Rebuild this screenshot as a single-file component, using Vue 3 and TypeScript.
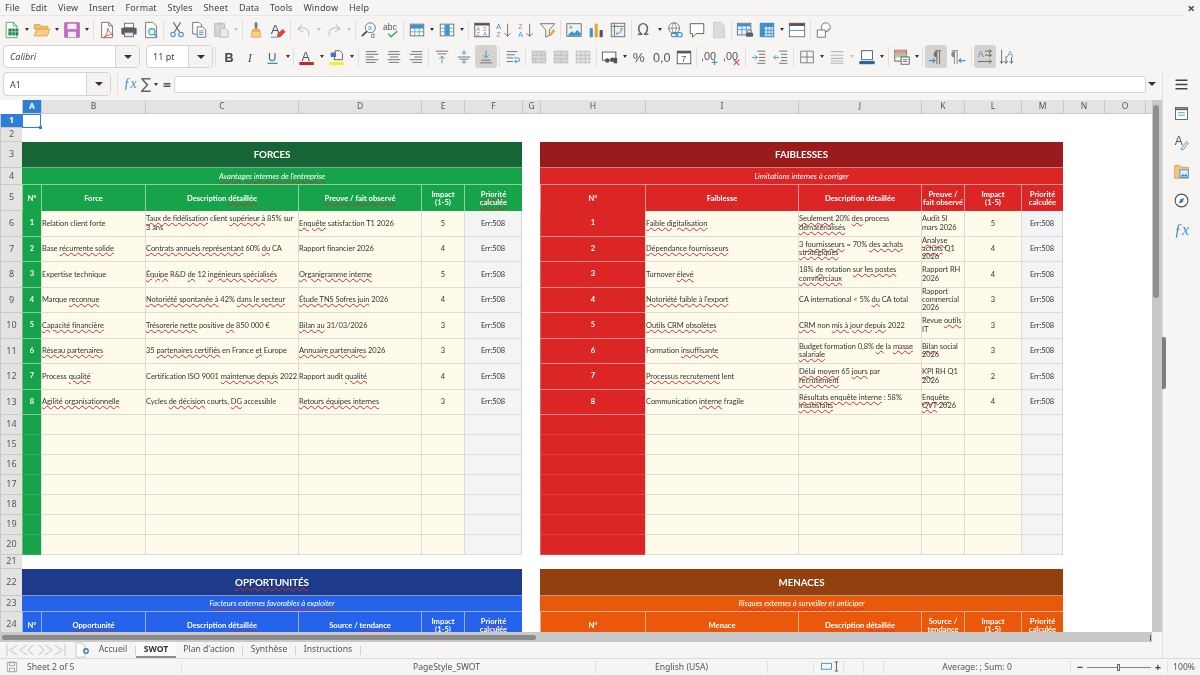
<script setup lang="ts">
import { computed } from 'vue';

type Cell = { key: string; cls: string; col: number; row: number; span: number; text: string };

const menus = ['File', 'Edit', 'View', 'Insert', 'Format', 'Styles', 'Sheet', 'Data', 'Tools', 'Window', 'Help'];

// ">" = petite fleche, "|" = separateur, "!" devant = bouton actif, "-" = fleche grisee
const toolbar1 = ['new', '>', 'open', '>', 'save', '>', '|', 'pdf', 'print', 'preview', '|', 'cut', 'copy', 'paste', '-', '|', 'clone', 'clear', '|', 'undo', '-', 'redo', '-', '|', 'find', 'spell', '|', 'rows', '>', 'cols', '>', '|', 'sort', 'asc', 'desc', 'filter', '|', 'image', 'chart', 'pivot', '|', 'omega', '>', 'link', 'comment', 'hf', '|', 'printarea', 'freeze', '>', 'split', '|', 'shapes'];
const toolbar2 = ['|', 'bold', 'italic', 'under', '>', '|', 'color', '>', 'hilite', '>', '|', 'left', 'center', 'right', '|', 'top', 'middle', '!bottom', '|', 'wrap', '|', 'merge', 'merge2', 'merge3', '|', 'money', '>', 'pct', 'num', 'date', '|', 'adddec', 'deldec', '|', 'indent', 'outdent', '|', 'borders', '>', 'bstyle', '-', 'bcolor', '>', '|', 'cond', '>', '|', '!ltr', 'rtl', '|', '!horiz', 'vert'];

const blue = '#3b93cf';
const gray = '#6b6b6b';
const line = (d: string, c = gray, w = 1) => `<path d="${d}" fill="none" stroke="${c}" stroke-width="${w}"/>`;
const grid = (c: string) => `<rect x="2.5" y="3.5" width="15" height="13" fill="#fff" stroke="${gray}"/><path d="M2.5 8h15M2.5 12h15M7.5 3.5v13M12.5 3.5v13" stroke="${c}" stroke-width=".8"/>`;

const icons: Record<string, string> = {
  new: `<path d="M3.5 1.5h8l4 4v13h-12z" fill="#fff" stroke="#4da463"/><path d="M11.5 1.5v4h4" fill="none" stroke="#4da463"/><rect x="6" y="8.5" width="11" height="7.5" fill="#1f8a46"/><path d="M6 12h11M10 8.5V16M13.5 8.5V16" stroke="#d6f0dd" stroke-width=".7"/>`,
  open: `<path d="M1.5 4h6l2 2h7v3h-15z" fill="#f2c274" stroke="#e59b36"/><path d="M1.5 16.5 4.5 9h14l-2.5 7.500z" fill="#f8cf8a" stroke="#e59b36"/>`,
  save: `<path d="M2 2h16v16H2z" fill="#c06fc4" stroke="#a552aa"/><rect x="5" y="3" width="10" height="6" fill="#f7ecf8"/><rect x="5.500" y="12" width="9" height="6" fill="#f7ecf8"/>`,
  pdf: `<path d="M4 1.500h8l4 4v13H4z" fill="#fff" stroke="${gray}"/><path d="M12 1.500v4h4" fill="none" stroke="${gray}"/><path d="M7 18c3-3 4-7 4-10 1 4 3 6 6 7-4 0-8 1-10 3z" fill="none" stroke="#d8503f" stroke-width="1"/>`,
  print: `<rect x="5" y="2.500" width="10" height="5" fill="#fff" stroke="${gray}"/><rect x="1.500" y="7.500" width="17" height="7.500" rx="1" fill="#55606b"/><rect x="5" y="12.500" width="10" height="5" fill="#dfe6ea" stroke="${gray}"/>`,
  preview: `<path d="M4 1.500h8l4 4v13H4z" fill="#fff" stroke="${gray}"/><circle cx="11" cy="12" r="3.500" fill="#e4f1fa" stroke="${blue}" stroke-width="1.200"/><path d="m13.500 14.500 3.500 3.500" stroke="${blue}" stroke-width="1.500"/>`,
  cut: `<path d="m6 1.500 7 11M14 1.500l-7 11" stroke="#5c6670" stroke-width="1.200"/><circle cx="5.500" cy="15" r="2.500" fill="none" stroke="${blue}" stroke-width="1.200"/><circle cx="14.500" cy="15" r="2.500" fill="none" stroke="${blue}" stroke-width="1.200"/>`,
  copy: `<path d="M3 1.500h7l3 3v10H3z" fill="#fff" stroke="${gray}"/><path d="M8 6.500h6l3.500 3.500v8H8z" fill="#fff" stroke="${gray}"/>${line('M10 11h5M10 13h5M10 15h5', blue)}`,
  paste: `<rect x="3" y="3" width="11" height="14" fill="#d5d5d3" stroke="#b9b9b7"/><rect x="6" y="1.500" width="5" height="3" fill="#c5c5c3"/><path d="M9 8h6l3 3v7H9z" fill="#e9e9e7" stroke="#b9b9b7"/>`,
  clone: `<path d="M8.500 1.500h3v7h-3z" fill="#777" /><path d="M5.500 9h9v2.500h-9z" fill="#f0a94e"/><path d="M5.500 11.500h9l1 6.500h-11z" fill="#fbd08f" stroke="#e59b36" stroke-width=".8"/>`,
  clear: `<text x="2" y="14" font-size="15" font-family="Liberation Sans" fill="#4d5a66">A</text><path d="m9 15 6-6 3.500 3-6 6H9z" fill="#e2443f"/>${line('M2 18h8', blue)}`,
  undo: line('M3 9l5-5M3 9l6 3M3.500 9C10 6 17 8 15 17', '#c8c8c6', 1.300),
  redo: line('M17 9l-5-5M17 9l-6 3M16.500 9C10 6 3 8 5 17', '#c8c8c6', 1.300),
  find: `<circle cx="11.500" cy="7.500" r="5.500" fill="#fff" stroke="#5c6670"/><path d="m7.500 11.500-5.500 5.500" stroke="#444" stroke-width="1.800"/><text x="9" y="10" font-size="7.500" font-family="Liberation Sans" fill="${blue}">a</text><text x="12" y="19" font-size="8" font-family="Liberation Sans" fill="#555">d</text>`,
  spell: `<text x="1" y="10" font-size="9.500" font-family="Liberation Sans" fill="#555">abc</text>${line('m7 14 3 3.500 7-6', '#38a560', 1.500)}`,
  rows: grid(blue) + `<rect x="3" y="4" width="14" height="4" fill="${blue}"/>`,
  cols: grid(blue) + `<rect x="8" y="4" width="4.500" height="12" fill="${blue}"/>`,
  sort: `<rect x="2" y="2.500" width="16" height="15" fill="#fff" stroke="#555"/><rect x="2" y="2.500" width="16" height="2.500" fill="#555"/><text x="3.500" y="11" font-size="6.500" font-family="Liberation Sans" fill="${blue}">A</text><text x="3.500" y="17" font-size="6.500" font-family="Liberation Sans" fill="#c56cc4">Z</text><text x="11" y="11" font-size="6.500" font-family="Liberation Sans" fill="#c56cc4">Z</text><text x="11" y="17" font-size="6.500" font-family="Liberation Sans" fill="${blue}">A</text>`,
  asc: `<text x="1.500" y="9" font-size="8" font-family="Liberation Sans" fill="${blue}">A</text><text x="1.500" y="18" font-size="8" font-family="Liberation Sans" fill="#c56cc4">Z</text>${line('M14 3v14M10.500 13.500 14 17l3.500-3.500')}`,
  desc: `<text x="1.500" y="9" font-size="8" font-family="Liberation Sans" fill="#c56cc4">Z</text><text x="1.500" y="18" font-size="8" font-family="Liberation Sans" fill="${blue}">A</text>${line('M14 3v14M10.500 13.500 14 17l3.500-3.500')}`,
  filter: `${line('M1.500 3h16l-6 7v6l-4 2v-8z')}<path d="m11 16 5-7 2 2-5 6z" fill="#eea22f"/>`,
  image: `<rect x="2" y="3" width="16" height="14" fill="#e8f3fa" stroke="${gray}"/><circle cx="6.500" cy="7" r="1.600" fill="#eea22f"/><path d="m2.500 16.500 5-5 3 2 3-3.500 4 4v2.500z" fill="${blue}"/>`,
  chart: `<rect x="3" y="8" width="3.500" height="10" fill="${blue}"/><rect x="8.500" y="3" width="3.500" height="15" fill="#eea22f"/><rect x="14" y="10" width="3.500" height="8" fill="#555"/>`,
  pivot: `<rect x="2.500" y="2.500" width="15" height="15" fill="#eee" stroke="${gray}"/>${line('M2.500 6h15M6 2.500v15')}${line('M8 14c4 0 6-2 6-6M12.500 9.500 14 8l1.500 1.500M9.500 12.500 8 14l1.500 1.500', blue)}`,
  omega: `<text x="1.500" y="16" font-size="17" font-family="DejaVu Sans" fill="#5c6670">Ω</text>`,
  link: `<circle cx="9" cy="8" r="6" fill="#fff" stroke="#66727c"/>${line('M3 8h12M9 2c-3 3-3 9 0 12M9 2c3 3 3 9 0 12', '#66727c', .8)}<rect x="6" y="13" width="7" height="4.500" rx="2.200" fill="none" stroke="${blue}" stroke-width="1.300"/><rect x="11" y="13" width="7" height="4.500" rx="2.200" fill="none" stroke="${blue}" stroke-width="1.300"/>`,
  comment: `<path d="M2.500 3h15v11H9l-4 4v-4H2.500z" fill="#fff" stroke="#555"/>`,
  hf: `<path d="M4 1.500h8l4 4v13H4z" fill="#dcdcda" stroke="#cacac8"/>`,
  printarea: `<rect x="1.500" y="2.500" width="15" height="13" fill="#eaf3fa" stroke="${gray}"/><rect x="2" y="3" width="14" height="3" fill="${blue}"/>${line('M1.500 9.500h15M6.500 2.500v13M11.500 2.500v13', blue, .8)}<rect x="11" y="13" width="8" height="4.500" rx="1" fill="#55606b"/><rect x="12.500" y="11" width="5" height="2" fill="#fff" stroke="#555" stroke-width=".6"/>`,
  freeze: `<rect x="2.500" y="2.500" width="15" height="15" fill="#cfe5f4" stroke="#2a7db6"/><rect x="2.500" y="2.500" width="5" height="15" fill="#3b93cf"/><rect x="2.500" y="2.500" width="15" height="4" fill="#3b93cf"/>${line('M2.500 10.500h15M2.500 14h15M11 2.500v15M14.500 2.500v15', '#2a7db6', .7)}`,
  split: `<rect x="1.500" y="2.500" width="17" height="15" fill="#fff" stroke="${gray}"/><rect x="1.500" y="2.500" width="17" height="3" fill="#555"/>${line('M1.500 10.500h17', blue)}`,
  shapes: `<circle cx="12" cy="7" r="5" fill="#fff" stroke="${gray}"/><path d="M2.500 10h9v8h-9z" fill="#fff" stroke="${gray}"/>${line('m12 12 4-4', blue)}`,
  bold: `<text x="5" y="15" font-size="14" font-weight="700" font-family="Liberation Sans" fill="#444">B</text>`,
  italic: `<text x="6.500" y="15" font-size="14" font-style="italic" font-family="Liberation Serif" fill="#555">I</text>`,
  under: `<text x="4.500" y="14" font-size="13" font-family="Liberation Sans" fill="#555">U</text><path d="M4 17h11" stroke="${blue}" stroke-width="1.500"/>`,
  color: `<text x="4" y="14" font-size="14" font-family="Liberation Sans" fill="#555">A</text><rect x="1.500" y="15.500" width="16" height="3.500" fill="#c1272d"/>`,
  hilite: `<rect x="1.500" y="15.500" width="16" height="3.500" fill="#f7ef2a"/><path d="M8 3h5l3 3v7H7z" fill="#fff" stroke="#555"/><rect x="3" y="5" width="6" height="5" fill="#3f78b5"/>`,
  left: line('M3 4h12M3 7h14M3 10h9M3 13h14M3 16h11'),
  center: line('M4 4h12M3 7h14M5.500 10h9M3 13h14M4.500 16h11'),
  right: line('M5 4h12M3 7h14M8 10h9M3 13h14M6 16h11'),
  top: `${line('M3 3.500h14M5 6.500h10')}${line('M10 17V9M7 12l3-3 3 3', blue)}`,
  middle: `${line('M3 10h14M5 12.500h10')}${line('M10 2v5M7.500 4.500 10 7l2.500-2.500M10 18v-3.500M7.500 16.500 10 14l2.500 2.500', blue)}`,
  bottom: `${line('M5 13.500h10M3 16.500h14')}${line('M10 3v8M7 8l3 3 3-3', blue)}`,
  wrap: `${line('M3 4h12M3 7.500h9M3 11h7M3 15h7')}${line('M11 11h4.500q2 0 2 2t-2 2H12M14 13l-2 2 2 2', blue)}`,
  merge: `<rect x="2.500" y="3.500" width="15" height="13" fill="#d7d7d5" stroke="#bcbcba"/>${line('M2.500 8h15M2.500 12h15M7.500 3.500V8M12.500 3.500V8M6 12v4.500M13 12v4.500', '#bcbcba')}`,
  merge2: `<rect x="2.500" y="3.500" width="15" height="13" fill="#d7d7d5" stroke="#bcbcba"/>${line('M2.500 8h15M2.500 12h15M10 3.500V8M10 12v4.500', '#bcbcba')}`,
  merge3: `<rect x="2.500" y="3.500" width="15" height="13" fill="#e3e3e1" stroke="#bcbcba"/>${line('M2.500 8h15M2.500 12h15M7.500 3.500v13M12.500 3.500v13', '#bcbcba')}`,
  money: `<rect x="1.500" y="4.500" width="15" height="9" fill="#fff" stroke="#555"/><circle cx="7" cy="14" r="2.500" fill="#555"/><circle cx="12.500" cy="13" r="2.500" fill="#555"/><rect x="14" y="11" width="4" height="6" fill="#555"/>`,
  pct: `<text x="2" y="16" font-size="15" font-family="Liberation Sans" fill="#555">%</text>`,
  num: `<text x="0" y="15" font-size="14" font-family="Liberation Sans" fill="#555">0,0</text>`,
  date: `<rect x="2.500" y="3.500" width="15" height="14" fill="#fff" stroke="#555"/><rect x="2.500" y="3.500" width="15" height="2.500" fill="#555"/><text x="7" y="15.500" font-size="10" font-family="Liberation Sans" fill="#555">7</text>`,
  adddec: `<text x="0" y="13" font-size="12" font-family="Liberation Sans" fill="#555">,00</text>${line('M15 13v6M12 16h6', blue, 1.300)}`,
  deldec: `<text x="0" y="13" font-size="12" font-family="Liberation Sans" fill="#555">,00</text>${line('m12 13 6 6M18 13l-6 6', '#d8503f', 1.300)}`,
  indent: `${line('M8 3.500h9M10 7h7M10 10.500h7M10 14h7M8 17h9')}${line('M2 10.500h6M5.500 8l2.500 2.500L5.500 13', blue)}`,
  outdent: `${line('M8 3.500h9M10 7h7M10 10.500h7M10 14h7M8 17h9')}${line('M8 10.500H2M4.500 8 2 10.500 4.500 13', blue)}`,
  borders: line('M3 3.500h14v13H3zM3 10h14M10 3.500v13', '#777'),
  bstyle: line('M3 4h14M3 8h14M3 11.500h14M3 14.500h14M3 17h14', '#b8b8b6', 1.200),
  bcolor: `<rect x="4" y="3" width="12" height="10" fill="#fff" stroke="#555"/><path d="M1.500 14.500h17V18h-17z" fill="#23659f"/>`,
  cond: `<rect x="2" y="2.500" width="13" height="12" fill="#fff" stroke="#555"/><rect x="2" y="2.500" width="13" height="4" fill="#e98f87"/><rect x="2" y="6.500" width="13" height="4" fill="#9dd09f"/><rect x="9" y="10" width="9" height="8" fill="#fff" stroke="#555"/>${line('M11 13h5M11 15h5')}`,
  ltr: `${line('M9 3h7M11 3v15M14 3v15', '#6f6f6d', 1.100)}<path d="M11 3.500a3.500 3.500 0 0 0 0 7z" fill="#6f6f6d"/>${line('M2 14h7M6.500 11.500 9 14l-2.500 2.500', blue, 1.200)}`,
  rtl: `${line('M3 3h7M6 3v15M9 3v15', '#8a8a88', 1.100)}<path d="M6 3.500a3.500 3.500 0 0 0 0 7z" fill="#8a8a88"/>${line('M18 14h-7M13.500 11.500 11 14l2.500 2.500', blue, 1.200)}`,
  horiz: `<text x="2" y="10" font-size="10" font-family="Liberation Sans" fill="${blue}">A</text>${line('M10 3.500h7M14.500 1.500l2.500 2 -2.500 2M10 8h7M14.500 6l2.500 2-2.500 2M2 15h15M14.500 12.500l2.500 2.500-2.500 2.500', '#555', .9)}`,
  vert: `<text x="10" y="10" font-size="10" font-family="Liberation Sans" fill="${blue}">A</text>${line('M4 2v15M2 14.500 4 17l2-2.500M9 9v8M7 14.500 9 17l2-2.500M15 10v7M13 14.500l2 2.500 2-2.500', '#555', .9)}`,
};

const letters = ['A', 'B', 'C', 'D', 'E', 'F', 'G', 'H', 'I', 'J', 'K', 'L', 'M', 'N', 'O'];
const colWidths = [22, 19, 104, 153, 123, 43, 58, 18, 105, 153, 123, 43, 57, 42, 41, 41, 7];
const rowHeights = [14, 14, 14, 26, 17, 26, 25.5, 25.5, 25.5, 25.5, 25.5, 25.5, 25.5, 25.5, 20, 20, 20, 20, 20, 20, 20, 14, 27, 16, 26];
const gridStyle = {
  gridTemplateColumns: colWidths.map((w) => w + 'px').join(' '),
  gridTemplateRows: rowHeights.map((h) => h + 'px').join(' '),
};

// les mots entre ~ ~ ont le soulignement du correcteur
const forces = [
  ['Relation client forte', '~Taux de fidélisation~ client ~supérieur à~ 85% sur 3 ans', '~Enquête~ satisfaction T1 2026', '5'],
  ['Base ~récurrente solide~', '~Contrats annuels représentant~ 60% ~du~ CA', 'Rapport financier 2026', '4'],
  ['Expertise technique', '~Équipe~ R&D ~de~ 12 ~ingénieurs spécialisés~', '~Organigramme interne~', '5'],
  ['Marque ~reconnue~', '~Notoriété spontanée à~ 42% ~dans le secteur~', '~Étude TNS Sofres juin~ 2026', '4'],
  ['~Capacité financière~', '~Trésorerie nette~ positive ~de~ 850 000 €', '~Bilan au~ 31/03/2026', '3'],
  ['~Réseau partenaires~', '35 ~partenaires certifiés~ en France ~et~ Europe', '~Annuaire partenaires~ 2026', '3'],
  ['Process ~qualité~', 'Certification ISO 9001 ~maintenue depuis~ 2022', 'Rapport audit ~qualité~', '4'],
  ['~Agilité organisationnelle~', 'Cycles ~de décision~ courts, ~DG~ accessible', '~Retours équipes internes~', '3'],
];
const faiblesses = [
  ['~Faible digitalisation~', '~Seulement~ 20% ~des~ process ~dématérialisés~', 'Audit SI mars 2026', '5'],
  ['~Dépendance fournisseurs~', '3 ~fournisseurs~ = 70% ~des achats stratégiques~', '~Analyse achats~ Q1 2026', '4'],
  ['Turnover ~élevé~', '18% ~de~ rotation ~sur les postes commerciaux~', 'Rapport RH 2026', '4'],
  ["~Notoriété faible à l'export~", 'CA international < 5% ~du~ CA total', 'Rapport commercial 2026', '3'],
  ['~Outils CRM obsolètes~', '~CRM~ non ~mis à jour depuis~ 2022', 'Revue ~outils~ IT', '3'],
  ['Formation ~insuffisante~', 'Budget formation 0,8% ~de~ la ~masse salariale~', '~Bilan~ social 2026', '3'],
  ['~Processus recrutement~ lent', '~Délai moyen~ 65 ~jours~ par ~recrutement~', '~KPI~ RH Q1 2026', '2'],
  ['Communication ~interne~ fragile', '~Résultats enquête interne~ : 58% ~insatisfaits~', '~Enquête QVT~ 2026', '4'],
];

const blocks = [
  { color: 'green', col: 2, row: 3, title: 'FORCES', sub: "~Avantages internes de l'entreprise~", heads: ['N°', 'Force', 'Description ~détaillée~', '~Preuve / fait observé~', 'Impact\n(1-5)', '~Priorité\ncalculée~'], rows: forces, blanks: 7 },
  { color: 'red', col: 9, row: 3, title: 'FAIBLESSES', sub: 'Limitations internes à corriger', heads: ['N°', 'Faiblesse', 'Description détaillée', 'Preuve /\nfait observé', 'Impact\n(1-5)', 'Priorité\ncalculée'], rows: faiblesses, blanks: 7 },
  { color: 'blue', col: 2, row: 22, title: '~OPPORTUNITÉS~', sub: '~Facteurs externes favorables à exploiter~', heads: ['N°', '~Opportunité~', 'Description ~détaillée~', 'Source / ~tendance~', 'Impact\n(1-5)', '~Priorité\ncalculée~'], rows: [], blanks: 0 },
  { color: 'orange', col: 9, row: 22, title: 'MENACES', sub: '~Risques externes à surveiller et anticiper~', heads: ['N°', 'Menace', 'Description ~détaillée~', 'Source /\ntendance', 'Impact\n(1-5)', 'Priorité\ncalculée'], rows: [], blanks: 0 },
];

const cells = computed(() => {
  const out: Cell[] = [];
  const add = (cls: string, col: number, row: number, span: number, text: string) =>
    out.push({ key: `${col}-${row}`, cls, col, row, span, text });
  // en-tetes de colonnes et de lignes
  letters.forEach((l, i) => add(i === 0 ? 'head on' : 'head', i + 2, 1, 1, l));
  add('head', 17, 1, 1, '');
  for (let r = 1; r <= 24; r++) add(r === 1 ? 'head side on' : 'head side', 1, r + 1, 1, String(r));
  for (const b of blocks) {
    const y = b.row + 1;
    add(`title ${b.color}`, b.col, y, 6, b.title);
    add(`sub ${b.color}`, b.col, y + 1, 6, b.sub);
    b.heads.forEach((h, i) => add(`th ${b.color}`, b.col + i, y + 2, 1, h));
    b.rows.forEach((r, i) => {
      const ry = y + 3 + i;
      add(`num ${b.color}`, b.col, ry, 1, String(i + 1));
      add('td', b.col + 1, ry, 1, r[0]);
      add('td', b.col + 2, ry, 1, r[1]);
      add('td', b.col + 3, ry, 1, r[2]);
      add('td mid', b.col + 4, ry, 1, r[3]);
      add('td mid prio', b.col + 5, ry, 1, 'Err:508');
    });
    for (let i = 0; i < b.blanks; i++) {
      const ry = y + 3 + b.rows.length + i;
      add(`num blank ${b.color}`, b.col, ry, 1, '');
      for (let c = 1; c <= 4; c++) add('td', b.col + c, ry, 1, '');
      add('td prio', b.col + 5, ry, 1, '');
    }
  }
  return out;
});

const parts = (text: string) =>
  text.split('~').map((t, i) => ({ t, err: i % 2 === 1 })).filter((p) => p.t);
</script>

<template>
  <div class="app">
    <div class="menubar">
      <span v-for="m in menus" :key="m">{{ m }}</span>
      <span class="close">×</span>
    </div>

    <div class="toolbar t1">
      <template v-for="(it, i) in toolbar1" :key="i">
        <span v-if="it === '|'" class="sep"></span>
        <span v-else-if="it === '>'" class="arrow"></span>
        <span v-else-if="it === '-'" class="arrow off"></span>
        <span v-else class="tool"><svg viewBox="0 0 20 20" v-html="icons[it]"></svg></span>
      </template>
    </div>

    <div class="toolbar t2">
      <div class="combo font"><span class="val"><i>Calibri</i></span><span class="drop"></span></div>
      <div class="combo size"><span class="val">11 pt</span><span class="drop"></span></div>
      <template v-for="(it, i) in toolbar2" :key="i">
        <span v-if="it === '|'" class="sep"></span>
        <span v-else-if="it === '>'" class="arrow"></span>
        <span v-else-if="it === '-'" class="arrow off"></span>
        <span v-else class="tool" :class="{ active: it[0] === '!' }"><svg viewBox="0 0 20 20" v-html="icons[it.replace('!', '')]"></svg></span>
      </template>
    </div>

    <div class="middle">
      <div class="main">
        <div class="formula">
          <div class="combo name"><span class="val">A1</span><span class="drop"></span></div>
          <span class="sep tall"></span>
          <span class="fx">ƒx</span>
          <span class="sigma">∑</span>
          <span class="arrow"></span>
          <span class="eq">=</span>
          <div class="input"></div>
          <span class="arrow big"></span>
        </div>

        <div class="work">
          <div class="sheet">
            <div class="cells" :style="gridStyle">
              <div
                v-for="c in cells"
                :key="c.key"
                class="cell"
                :class="c.cls"
                :style="{ gridColumn: `${c.col} / span ${c.span}`, gridRow: c.row }"
              >
                <span class="txt"><template v-for="(p, i) in parts(c.text)" :key="i"><span v-if="p.err" class="err">{{ p.t }}</span><template v-else>{{ p.t }}</template></template></span>
              </div>
              <div class="cursor"><span class="handle"></span></div>
            </div>
          </div>
          <div class="vscroll"><span class="vthumb"></span></div>
        </div>

        <div class="hscroll"><span class="hthumb"></span><span class="hmark"></span></div>

        <div class="tabs">
          <svg class="nav" viewBox="0 0 62 14">
            <path d="M2 1v12M12 2 5 7l7 5M22 2l-7 5 7 5M28 2l-5 5 5 5M34 2l5 5-5 5M40 2l7 5-7 5M50 2l7 5-7 5M60 1v12" fill="none" stroke="#d0d0ce" stroke-width="1.200" />
          </svg>
          <svg class="add" viewBox="0 0 14 16">
            <path d="M1 1h6l3 3v11H1z" fill="#fff" stroke="#c9c9c7" />
            <circle cx="11" cy="9" r="2.200" fill="none" stroke="#3f78b5" stroke-width="1.400" />
          </svg>
          <span class="tab t-a">Accueil</span><span class="tsep"></span>
          <span class="tab cur">SWOT</span>
          <span class="tab t-b">Plan d'action</span><span class="tsep"></span>
          <span class="tab t-c">Synthèse</span><span class="tsep"></span>
          <span class="tab t-d">Instructions</span><span class="tsep"></span>
        </div>
      </div>

      <aside class="sidebar">
        <svg viewBox="0 0 20 20"><path d="M3 5h14M3 10h14M3 15h14" stroke="#444" stroke-width="1.500" /></svg>
        <svg viewBox="0 0 20 20"><rect x="3" y="3" width="14" height="14" fill="#fff" stroke="#555" /><path d="M3 5h14" stroke="#555" stroke-width="2" /><path d="M6 9h8M6 12h8" stroke="#3b93cf" /></svg>
        <svg viewBox="0 0 20 20"><text x="2" y="13" font-size="14" font-family="Liberation Sans" fill="#555">A</text><path d="m9 18 7-9 2 1.500-6 8z" fill="none" stroke="#3b93cf" /></svg>
        <svg viewBox="0 0 20 20"><path d="M2 3h6l2 2h8v13H2z" fill="#f3c67e" stroke="#e59b36" /><rect x="8" y="8" width="10" height="9" fill="#dcecf7" stroke="#3b93cf" /><path d="m8.500 16 3-3 2 1.500 2-2 2 3.500z" fill="#3b93cf" /></svg>
        <svg viewBox="0 0 20 20"><circle cx="10" cy="10" r="7.500" fill="#fff" stroke="#555" stroke-width="1.300" /><path d="m13 7-1.500 5L7 13.500 8.500 8.500z" fill="#2f7fb8" /></svg>
        <span class="side-fx">ƒx</span>
        <span class="grip"></span>
      </aside>
    </div>

    <div class="status">
      <svg class="disk" viewBox="0 0 14 14"><path d="M1.500 1.500h11v11h-11z" fill="none" stroke="#9a9a98" /><path d="M4 1.500h6v4H4zM4 12.500v-4h6v4" fill="none" stroke="#9a9a98" /></svg>
      <span class="s s1">Sheet 2 of 5</span>
      <span class="s s2">PageStyle_SWOT</span>
      <span class="s s3">English (USA)</span>
      <span class="s s4a"></span>
      <span class="s s4"><svg viewBox="0 0 22 12"><rect x=".5" y="2.500" width="11" height="6.500" fill="none" stroke="#3b93cf" /><path d="M15 1h4M15 11h4M17 1v10" stroke="#555" /></svg></span>
      <span class="s s5"></span>
      <span class="s s6"></span>
      <span class="s s7">Average: ; Sum: 0</span>
      <span class="s s8"><b>−</b><span class="slider"><i></i></span><b>+</b></span>
      <span class="s s9">100%</span>
    </div>
  </div>
</template>

<style>
html,
body {
  margin: 0;
  background: #f6f5f4;
}
</style>

<style scoped>
.app {
  width: 1200px;
  height: 675px;
  overflow: hidden;
  display: flex;
  flex-direction: column;
  background: #f6f5f4;
  color: #3d3d3d;
  font-family: 'Noto Sans', sans-serif;
  font-size: 8.6px;
  /* la capture d'origine est un peu floue */
  filter: blur(0.3px);
}

.menubar {
  height: 16px;
  box-sizing: border-box;
  display: flex;
  align-items: center;
  gap: 10.9px;
  padding-left: 5px;
  font-size: 9px;
  letter-spacing: 0.1px;
  color: #454545;
  border-bottom: 1px solid #e8e7e5;
  margin-right: 16px;
  position: relative;
}
.close {
  position: absolute;
  right: -11px;
  top: 0;
  font-size: 13px;
  line-height: 16px;
  font-weight: 700;
}

.toolbar {
  display: flex;
  align-items: center;
  flex: none;
}
.t1 {
  height: 27px;
  padding-left: 1px;
}
.t2 {
  height: 27px;
  padding-left: 3px;
}
.tool {
  width: 22px;
  height: 23px;
  flex: none;
  display: flex;
  align-items: center;
  justify-content: center;
  border-radius: 3px;
}
.tool svg {
  width: 18px;
  height: 18px;
}
.tool.active {
  background: #d4d3d0;
}
.arrow {
  width: 8px;
  height: 8px;
  flex: none;
  display: flex;
  align-items: center;
  justify-content: center;
}
.arrow::before {
  content: '';
  border-left: 2.5px solid transparent;
  border-right: 2.5px solid transparent;
  border-top: 3px solid #333;
}
.arrow.off::before {
  border-top-color: #c4c4c2;
}
.arrow.big {
  width: 12px;
  margin-left: 0;
}
.arrow.big::before {
  border-left-width: 4px;
  border-right-width: 4px;
  border-top-width: 4px;
}
.sep {
  width: 1px;
  height: 20px;
  margin: 0 1.75px;
  flex: none;
  background: #e2e1df;
}

.combo {
  height: 23px;
  display: flex;
  flex: none;
  background: #fff;
  border: 1px solid #d5d4d2;
  border-radius: 4px;
  box-sizing: border-box;
  overflow: hidden;
}
.combo .val {
  flex: 1;
  display: flex;
  align-items: center;
  padding-left: 6px;
  font-size: 9px;
  color: #444;
}
.combo .drop {
  width: 23px;
  background: #f4f3f2;
  border-left: 1px solid #d5d4d2;
  display: flex;
  align-items: center;
  justify-content: center;
}
.combo .drop::before {
  content: '';
  border-left: 4px solid transparent;
  border-right: 4px solid transparent;
  border-top: 4px solid #333;
}
.font {
  width: 137px;
  margin-right: 6px;
}
.size {
  width: 67px;
}
.name {
  width: 108px;
  margin: 0 3px;
  height: 24px;
}

.middle {
  flex: 1;
  min-height: 0;
  display: flex;
}
.main {
  width: 1162px;
  display: flex;
  flex-direction: column;
}

.formula {
  height: 30px;
  box-sizing: border-box;
  padding-bottom: 2px;
  display: flex;
  align-items: center;
  flex: none;
}
.sep.tall {
  margin: 0 2px 0 3px;
}
.fx {
  width: 20px;
  text-align: center;
  font-family: 'Liberation Serif', serif;
  font-style: italic;
  font-size: 14px;
  color: #3b93cf;
}
.sigma {
  width: 12px;
  font-size: 15px;
  text-align: center;
  color: #666;
  font-family: 'DejaVu Sans', sans-serif;
}
.eq {
  width: 14px;
  font-size: 14px;
  text-align: center;
  color: #555;
  font-weight: 700;
}
.input {
  width: 972px;
  height: 17px;
  background: #fff;
  border: 1px solid #d8d7d5;
  box-sizing: border-box;
  border-radius: 2px;
}

.work {
  flex: 1;
  min-height: 0;
  display: flex;
}
.sheet {
  width: 1152px;
  overflow: hidden;
  background: #fff;
}
.cells {
  display: grid;
  position: relative;
  font-family: Lato, sans-serif;
  font-size: 7.5px;
  letter-spacing: -0.06px;
  color: #333;
}
.cell {
  box-sizing: border-box;
  display: flex;
  align-items: center;
  overflow: hidden;
  min-width: 0;
  min-height: 0;
  line-height: 8.3px;
}
.txt {
  display: block;
  min-width: 0;
  white-space: pre-line;
}
.err {
  text-decoration: underline wavy #d8262c 0.7px;
  text-underline-offset: 1px;
}

.head {
  background: #e3e3e1;
  border-left: 1px solid #c9c9c7;
  border-bottom: 1px solid #c9c9c7;
  justify-content: center;
  font-family: 'Noto Sans', sans-serif;
  font-size: 8.5px;
  letter-spacing: 0;
  color: #555;
}
.head.on {
  background: #2f7ed8;
  color: #fff;
  font-weight: 700;
}
.side {
  font-size: 9px;
}

.title {
  justify-content: center;
  font-size: 9.8px;
  font-weight: 700;
  color: #fff;
  border-bottom: 1px solid rgba(255, 255, 255, 0.45);
}
.sub {
  justify-content: center;
  font-style: italic;
  font-size: 7.8px;
  color: #fff;
  border-bottom: 1px solid rgba(255, 255, 255, 0.5);
}
.th {
  justify-content: center;
  text-align: center;
  font-weight: 700;
  font-size: 7.6px;
  letter-spacing: 0;
  color: #fff;
  border-left: 1px solid rgba(255, 255, 255, 0.5);
  padding: 0 1px;
}
.num {
  justify-content: center;
  font-weight: 700;
  color: #fff;
  border-left: 1px solid rgba(255, 255, 255, 0.3);
  border-bottom: 1px solid rgba(255, 255, 255, 0.45);
}
.num.blank {
  border-bottom-color: rgba(255, 255, 255, 0.12);
}
.title.green { background: #166534; }
.title.red { background: #991b1b; }
.title.blue { background: #1e3a8a; }
.title.orange { background: #92400e; }
.sub.green, .th.green, .num.green { background: #16a34a; }
.sub.red, .th.red, .num.red { background: #dc2626; }
.sub.blue, .th.blue, .num.blue { background: #2563eb; }
.sub.orange, .th.orange, .num.orange { background: #ea580c; }

.td {
  background: #fffbeb;
  border-left: 1px solid #dcdcd8;
  border-bottom: 1px solid #dcdcd8;
  padding: 1px 0 0 0;
}
.mid {
  justify-content: center;
}
.prio {
  background: #f3f4f6;
  border-right: 1px solid #d5d6da;
}

.cursor {
  position: absolute;
  left: 22px;
  top: 14px;
  width: 19px;
  height: 14px;
  box-sizing: border-box;
  border: 1px solid #2f7ed8;
}
.handle {
  position: absolute;
  right: -2px;
  bottom: -2px;
  width: 3px;
  height: 3px;
  background: #2f7ed8;
}

.vscroll {
  width: 10px;
  background: #c9c9c9;
  position: relative;
}
.vthumb {
  position: absolute;
  left: 1px;
  top: 5px;
  width: 6px;
  height: 193px;
  border-radius: 3px;
  background: #8f8f8f;
}
.hscroll {
  height: 10px;
  flex: none;
  width: 1152px;
  background: #c9c9c9;
  position: relative;
}
.hthumb {
  position: absolute;
  left: 2px;
  top: 3px;
  width: 534px;
  height: 5px;
  border-radius: 3px;
  background: #8a8a8a;
}
.hmark {
  position: absolute;
  right: 1px;
  top: 3px;
  width: 1px;
  height: 6px;
  background: #555;
}

.tabs {
  height: 16px;
  flex: none;
  display: flex;
  align-items: center;
  font-size: 8.6px;
  color: #555;
}
.nav {
  width: 62px;
  height: 14px;
  margin-left: 5px;
}
.add {
  width: 14px;
  height: 16px;
  margin-left: 8px;
}
.tab {
  height: 16px;
  line-height: 15px;
  box-sizing: border-box;
  text-align: center;
}
.t-a { margin-left: 2px; width: 44px; }
.tsep {
  width: 1px;
  height: 9px;
  background: #cfcfcd;
}
.cur {
  width: 40px;
  font-weight: 700;
  color: #333;
  background: #fbfbfa;
  border-bottom: 2px solid #8e8e8c;
}
.t-b { width: 66px; }
.t-c { width: 52px; }
.t-d { width: 64px; }

.sidebar {
  flex: 1;
  border-left: 1px solid #e0dfdd;
  display: flex;
  flex-direction: column;
  align-items: center;
  padding-top: 6px;
  gap: 12px;
  position: relative;
}
.sidebar svg {
  width: 17px;
  height: 17px;
  margin-right: 1px;
}
.side-fx {
  height: 17px;
  font-family: 'Liberation Serif', serif;
  font-style: italic;
  font-size: 16px;
  line-height: 17px;
  color: #3b93cf;
}
.grip {
  position: absolute;
  left: -1px;
  top: 267px;
  width: 4px;
  height: 52px;
  background: #7f7f7d;
  border-radius: 0 2px 2px 0;
}

.status {
  height: 17px;
  flex: none;
  display: flex;
  align-items: center;
  border-top: 1px solid #dcdbd9;
  box-sizing: border-box;
  font-size: 8.6px;
  color: #555;
}
.disk {
  width: 12px;
  height: 12px;
  margin-left: 6px;
}
.s {
  height: 12px;
  line-height: 12px;
  box-sizing: border-box;
  border-right: 1px solid #e2e1df;
  flex: none;
}
.s1 { width: 164px; padding-left: 9px; }
.s2 { width: 414px; padding-left: 231px; }
.s3 { width: 172px; text-align: center; }
.s4a { width: 46px; }
.s4 { width: 30px; padding-left: 7px; }
.s4 svg { width: 20px; height: 11px; }
.s5 { width: 20px; }
.s6 { width: 20px; }
.s7 { width: 187px; text-align: center; }
.s8 {
  width: 97px;
  display: flex;
  align-items: center;
  justify-content: center;
  gap: 2px;
}
.s8 b {
  font-size: 11px;
  font-weight: 700;
  width: 10px;
  text-align: center;
  color: #444;
}
.slider {
  width: 64px;
  height: 1px;
  background: #888;
  position: relative;
}
.slider i {
  position: absolute;
  left: 30px;
  top: -3px;
  width: 3px;
  height: 7px;
  box-sizing: border-box;
  border: 1px solid #666;
  background: #eee;
}
.s9 { flex: 1; text-align: center; border: 0; }
</style>
